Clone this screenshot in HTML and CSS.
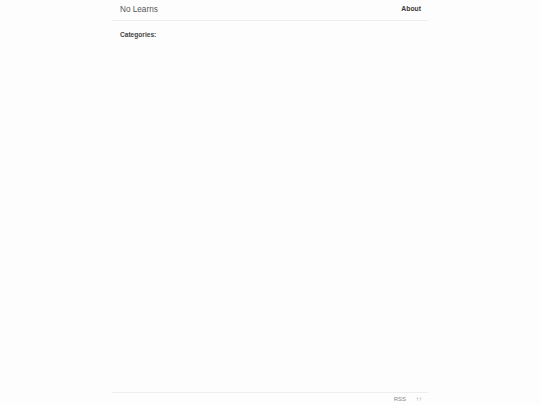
FILE: index.html
```html
<!DOCTYPE html>
<html lang="en">
<head>
<meta charset="utf-8">
<title>No Learns</title>
<link rel="stylesheet" href="styles.css">
</head>
<body>
<div class="page">
  <header class="site-header">
    <a class="site-title" href="#">No Learns</a>
    <nav class="site-nav"><a href="#">About</a></nav>
  </header>
  <main class="content">
    <h2 class="categories">Categories:</h2>
  </main>
  <footer class="site-footer">
    <a href="#">RSS</a>
    <a href="#">↑↑</a>
  </footer>
</div>
</body>
</html>
```
FILE: styles.css
```css
html, body {
  margin: 0;
  padding: 0;
  background: #fdfdfd;
  font-family: "Liberation Sans", Arial, sans-serif;
  color: #333;
}
a { text-decoration: none; color: inherit; }
.page {
  width: 316px;
  margin: 0 auto;
  min-height: 100vh;
  display: flex;
  flex-direction: column;
}
.site-header {
  display: flex;
  justify-content: space-between;
  align-items: flex-start;
  height: 20px;
  border-bottom: 1px solid #eeeeee;
  padding: 0 7px 0 8px;
}
.site-title {
  font-size: 8.2px;
  color: #555;
  line-height: 20px;
}
.site-nav {
  font-size: 6.8px;
  line-height: 17px;
}
.site-nav a {
  font-weight: bold;
  color: #3a3a3a;
}
.content {
  flex: 1;
  padding: 8px 7px 8px 8px;
}
.categories {
  margin: 0;
  font-size: 6.6px;
  font-weight: bold;
  color: #444;
  line-height: 12px;
}
.site-footer {
  border-top: 1px solid #eeeeee;
  height: 12px;
  display: flex;
  justify-content: flex-end;
  align-items: center;
  gap: 10px;
  padding: 0 6px 0 0;
  font-size: 6px;
  color: #888;
}
```
